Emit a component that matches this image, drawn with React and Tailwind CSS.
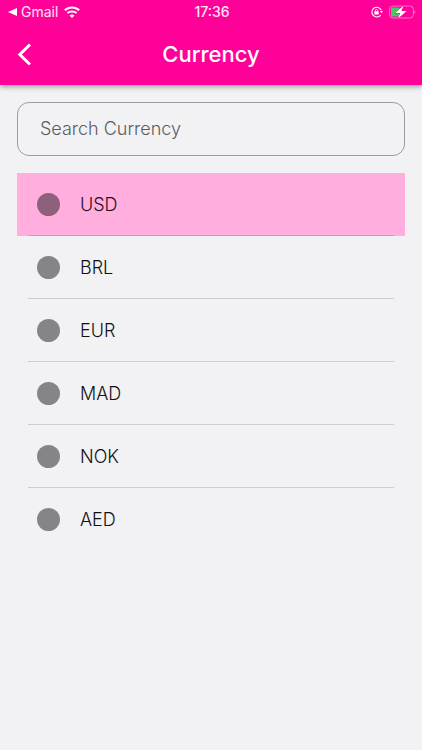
import { useState } from "react";

const currencies = ["USD", "BRL", "EUR", "MAD", "NOK", "AED"];

function WifiIcon() {
  return (
    <svg width="16" height="12" viewBox="0 0 16 12" fill="none" aria-hidden="true">
      <path d="M.8 4.300C4.800.500 11.200.500 15.200 4.300" stroke="currentColor" strokeWidth="2.100" />
      <path d="M3.400 7.100c2.600-2.300 6.600-2.300 9.200 0" stroke="currentColor" strokeWidth="2" />
      <path d="M8 12 5.500 9.500c1.400-1.300 3.600-1.300 5 0z" fill="currentColor" />
    </svg>
  );
}

function RotationLockIcon() {
  return (
    <svg width="12" height="12" viewBox="0 0 12 12" fill="none" aria-hidden="true">
      <path d="M10.300 4.200A4.900 4.900 0 1 0 9.700 9.100" stroke="currentColor" strokeWidth="1.100" />
      <path d="M8.900 5h3.100l-1.500 2.300z" fill="currentColor" />
      <rect x="3.300" y="5.300" width="4.400" height="3.200" rx=".5" fill="currentColor" />
      <path d="M4.300 5.600v-.9a1.200 1.200 0 0 1 2.400 0v.9" stroke="currentColor" strokeWidth=".9" />
    </svg>
  );
}

function BatteryIcon() {
  return (
    <svg width="27" height="14" viewBox="0 0 27 14" fill="none" aria-hidden="true">
      <rect x=".6" y="1" width="23.800" height="12" rx="3.500" stroke="#fff" strokeOpacity=".45" />
      <path d="M25.500 5.200c1.200.5 1.200 3.100 0 3.600z" fill="#fff" fillOpacity=".5" />
      <rect x="2" y="2.500" width="9" height="9" rx="1.500" fill="#4fc465" />
      <path
        d="M14.600.4 6.200 8h5L9 13.600l8.600-7.700h-5.200z"
        fill="#fff"
        stroke="#ff0099"
        strokeWidth="1"
        paintOrder="stroke"
      />
    </svg>
  );
}

function StatusBar() {
  return (
    <div className="grid h-6 grid-cols-3 items-center pr-1.5 pl-2">
      <div className="flex items-center gap-1.5">
        <div className="flex items-center gap-1">
          <svg width="9" height="8" viewBox="0 0 9 8" aria-hidden="true">
            <path d="M0 4 9 0v8z" fill="currentColor" />
          </svg>
          <span className="text-sm text-white/90">Gmail</span>
        </div>
        <WifiIcon />
      </div>
      <span className="text-center text-sm font-medium text-white/90">17:36</span>
      <div className="flex items-center justify-end gap-1.5">
        <RotationLockIcon />
        <BatteryIcon />
      </div>
    </div>
  );
}

function Header() {
  return (
    <header className="bg-[#ff0099] text-white shadow-[0_2px_5px_rgba(0,0,0,0.35)]">
      <StatusBar />
      <div className="grid h-[61px] grid-cols-[48px_1fr_48px] items-center">
        <button type="button" aria-label="Back" className="flex h-12 items-center pl-4">
          <svg width="17" height="24" viewBox="0 0 17 24" fill="none" aria-hidden="true">
            <path d="M14 1.500 3.800 11.500l10.200 10" stroke="currentColor" strokeWidth="3" />
          </svg>
        </button>
        <h1 className="text-center text-[22px] font-medium">Currency</h1>
      </div>
    </header>
  );
}

export default function App() {
  const [search, setSearch] = useState("");
  const [selected, setSelected] = useState("USD");

  const visible = currencies.filter((code) =>
    code.toLowerCase().includes(search.trim().toLowerCase())
  );

  return (
    <div className="min-h-screen bg-[#f2f2f4] font-['Inter',sans-serif]">
      <Header />

      <main className="px-[17px] pt-[17px]">
        {/* SEARCH */}
        <input
          type="text"
          aria-label="Search Currency"
          placeholder="Search Currency"
          value={search}
          onChange={(e) => setSearch(e.target.value)}
          className="h-[54px] w-full rounded-xl border border-[#9c9c9e] px-[22px] pb-0.5 text-lg font-light text-[#1c1c1e] outline-none placeholder:text-[#5c5c5e]"
        />

        {/* CURRENCY LIST */}
        <ul className="mt-[17px]">
          {visible.map((code) => (
            <li key={code} className="group">
              <label className="block px-[11px] text-[#111113] has-checked:bg-[#ffaedd] has-checked:text-[#2a0c20]">
                <span className="flex h-[63px] items-center gap-5 border-b border-black/15 px-[9px] group-last:border-transparent">
                  <input
                    type="radio"
                    name="currency"
                    value={code}
                    checked={selected === code}
                    onChange={() => setSelected(code)}
                    className="size-[23px] appearance-none rounded-full bg-[#858587] checked:bg-[#8d617c]"
                  />
                  <span className="pt-0.5 text-lg font-light">{code}</span>
                </span>
              </label>
            </li>
          ))}
        </ul>
      </main>
    </div>
  );
}
